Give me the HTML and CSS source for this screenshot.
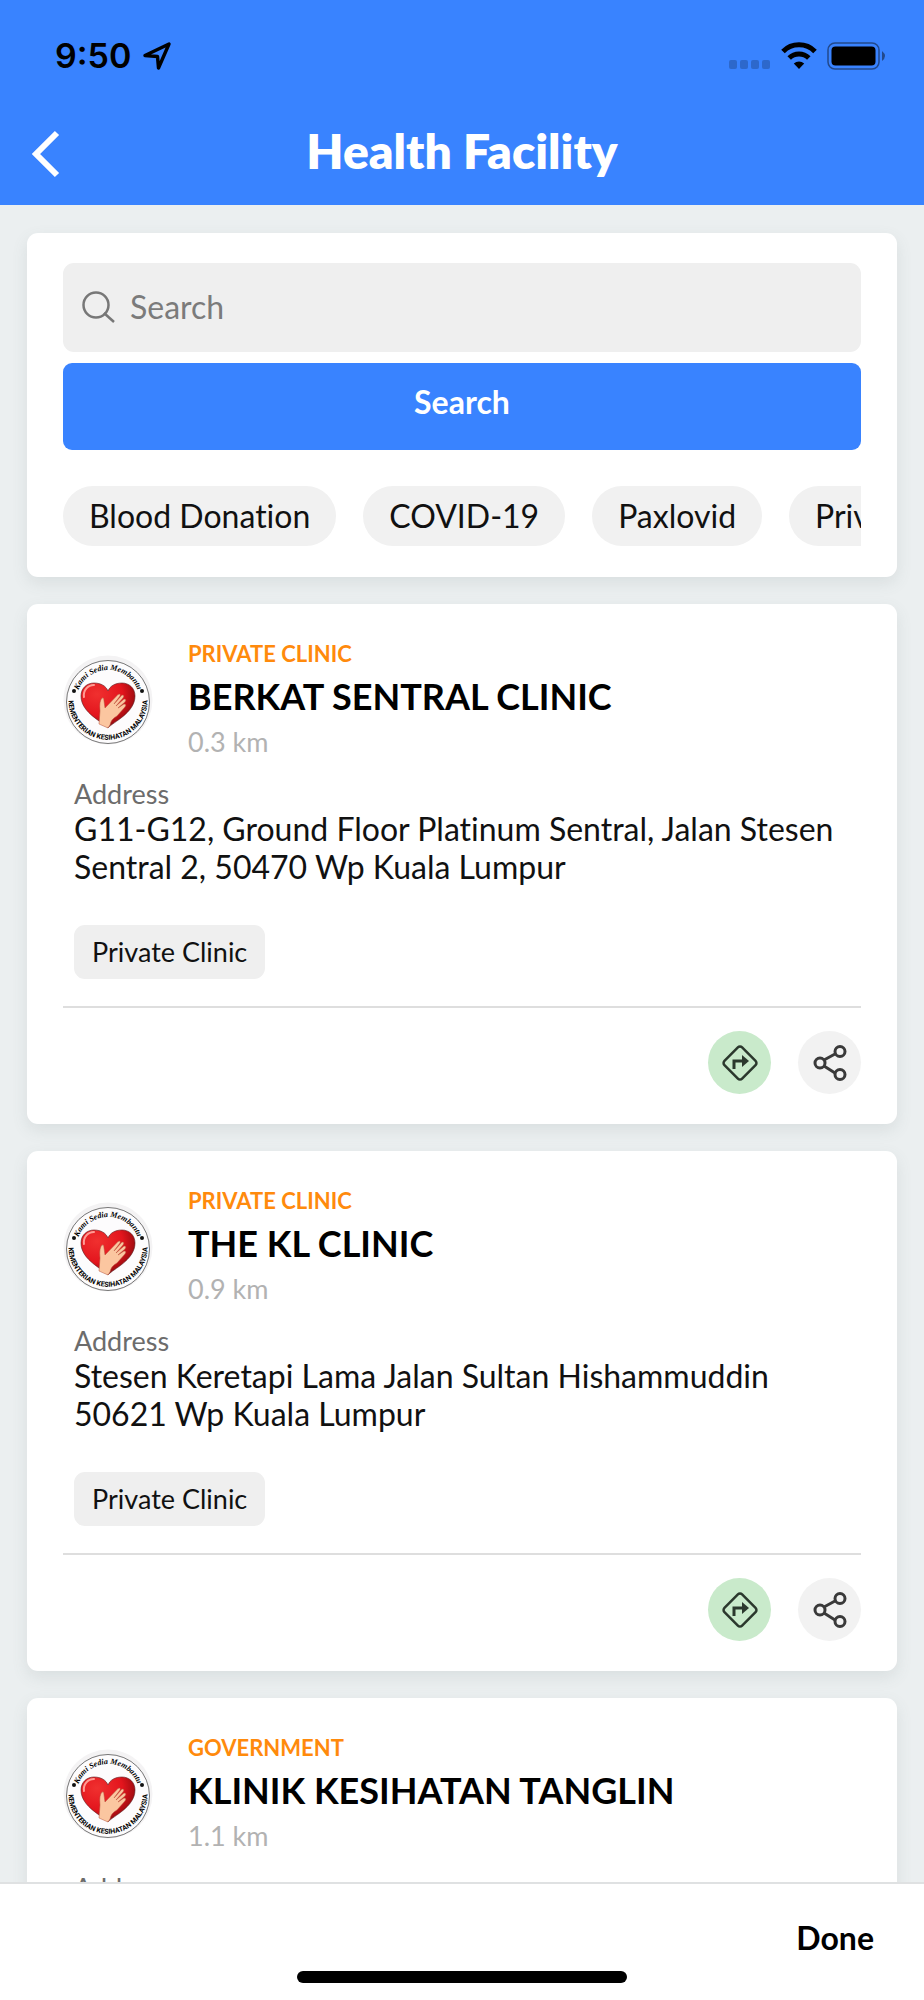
FILE: index.html
```html
<!DOCTYPE html>
<html lang="en">
<head>
    <meta charset="UTF-8">
    <meta name="viewport" content="width=device-width, initial-scale=1">
    <title>Health Facility</title>
    <link rel="stylesheet" href="styles.css">
</head>
<body>
<!-- shared icons -->
<svg class="sprite" aria-hidden="true">
    <defs>
        <radialGradient id="heartFill" cx="0.3" cy="0.25" r="0.85">
            <stop offset="0" stop-color="#f0302f"/>
            <stop offset="0.55" stop-color="#e3151d"/>
            <stop offset="0.8" stop-color="#a80d12"/>
            <stop offset="1" stop-color="#3a0406"/>
        </radialGradient>
        <path id="arcTop" d="M13 47 A32 32 0 0 1 77 47"/>
        <path id="arcBottom" d="M6 39 A39.500 39.500 0 1 0 84 39"/>
    </defs>
    <symbol id="logo" viewBox="0 0 90 90">
        <circle cx="45" cy="45" r="44.5" fill="#f4f3f4"/>
        <circle cx="45" cy="47" r="41.5" fill="#fdfcfd" stroke="#555" stroke-width="0.8"/>
        <path d="M45 73 C40 67 18 58 18 41 C18 33 24 28 31 28 C38 28 43 31 45 36 C47 31 52 28 59 28 C66 28 72 33 72 41 C72 58 50 67 45 73 Z" fill="url(#heartFill)" stroke="#5a1a1c" stroke-width="0.6"/>
        <path d="M21 42 C20 35 25 30 31 30" fill="none" stroke="#ff9c94" stroke-width="2" stroke-linecap="round"/>
        <path d="M36 69 L37 56 Q36 46 39 43 Q41 42 41 46 L42 53 L55 39.500 Q58 38 57 41 L51 49 L59 40 Q62 40 60 43 L53 51 L61 44 Q64 44 62 47 L55 53 L61 49 Q64 49 62 52 L54 61 Q48 64 47 70 L45 73 Z" fill="#fbc6a0" stroke="#b5523c" stroke-width="0.5"/>
        <circle cx="11" cy="36" r="2" fill="#111"/>
        <circle cx="79" cy="36" r="2" fill="#111"/>
        <text class="motto"><textPath href="#arcTop" startOffset="50%" text-anchor="middle">Kami Sedia Membantu</textPath></text>
        <text class="ministry"><textPath href="#arcBottom" startOffset="50%" text-anchor="middle">KEMENTERIAN KESIHATAN MALAYSIA</textPath></text>
    </symbol>
    <symbol id="directions" viewBox="0 0 36 36">
        <rect x="5.500" y="5.500" width="25" height="25" rx="3" transform="rotate(45 18 18)" fill="none" stroke="#2b382d" stroke-width="2.500"/>
        <path d="M12 24 V16 H21" fill="none" stroke="#2b382d" stroke-width="3"/>
        <path d="M20 10 L27 16 L20 22 Z" fill="#2b382d"/>
    </symbol>
    <symbol id="share" viewBox="0 0 36 36">
        <g fill="none" stroke="#3a3a3a" stroke-width="3">
            <path d="M12 15 L23 9 M12 21 L23 28"/>
            <circle cx="28" cy="6.500" r="5"/>
            <circle cx="8" cy="18" r="5"/>
            <circle cx="28" cy="29.500" r="5"/>
        </g>
    </symbol>
</svg>

<div class="app">
    <header class="header">
        <div class="statusbar">
            <span class="time">9:50</span>
            <svg class="location" width="28" height="28" viewBox="0 0 28 28"><path d="M2 13.500 L26 2 L15.500 26 L14.500 14.500 Z" fill="none" stroke="#000" stroke-width="3.400" stroke-linejoin="round"/></svg>
            <div class="signals">
                <svg width="42" height="28" viewBox="0 0 42 28" fill="#2d68cb"><rect x="0" y="18" width="8" height="9" rx="2"/><rect x="11" y="18" width="8" height="9" rx="2"/><rect x="22" y="18" width="8" height="9" rx="2"/><rect x="33" y="18" width="8" height="9" rx="2"/></svg>
                <svg width="36" height="28" viewBox="0 0 36 28"><path d="M2 9.500 A22.500 22.500 0 0 1 34 9.500" fill="none" stroke="#000" stroke-width="5"/><path d="M8.200 16 A14 14 0 0 1 27.800 16" fill="none" stroke="#000" stroke-width="5"/><path d="M18 27 L12.800 21.500 A8 8 0 0 1 23.200 21.500 Z"/></svg>
                <svg width="60" height="28" viewBox="0 0 60 28"><rect x="1" y="1" width="51" height="26" rx="7" fill="none" stroke="#22498c" stroke-width="1.500"/><rect x="4.500" y="4.500" width="44" height="19" rx="4"/><path d="M55 9 Q61 14 55 19 Z" fill="#22498c"/></svg>
            </div>
        </div>
        <div class="navbar">
            <button class="back" type="button" aria-label="Back"><svg width="30" height="48" viewBox="0 0 30 48"><path d="M26 3 L5 24 L26 45" fill="none" stroke="#fff" stroke-width="6"/></svg></button>
            <h1>Health Facility</h1>
        </div>
    </header>

    <main class="content">
        <form class="card search">
            <label class="search-box">
                <svg width="34" height="32" viewBox="0 0 34 32"><g fill="none" stroke="#777" stroke-width="2.500"><circle cx="14" cy="14" r="12.500"/><path d="M22 22 L32 31"/></g></svg>
                <input type="search" placeholder="Search" aria-label="Search">
            </label>
            <button class="search-button" type="submit">Search</button>
            <div class="filters">
                <button type="button">Blood Donation</button>
                <button type="button">COVID-19</button>
                <button type="button">Paxlovid</button>
                <button type="button">Private Clinic</button>
            </div>
        </form>

        <article class="card facility">
            <div class="summary">
                <svg class="logo"><use href="#logo"/></svg>
                <div>
                    <p class="type">PRIVATE CLINIC</p>
                    <h2>BERKAT SENTRAL CLINIC</h2>
                    <p class="distance">0.3 km</p>
                </div>
            </div>
            <div class="details">
                <p class="label">Address</p>
                <p class="address">G11-G12, Ground Floor Platinum Sentral, Jalan Stesen Sentral 2, 50470 Wp Kuala Lumpur</p>
                <span class="tag">Private Clinic</span>
            </div>
            <div class="actions">
                <button class="go" type="button" aria-label="Directions"><svg><use href="#directions"/></svg></button>
                <button type="button" aria-label="Share"><svg><use href="#share"/></svg></button>
            </div>
        </article>

        <article class="card facility">
            <div class="summary">
                <svg class="logo"><use href="#logo"/></svg>
                <div>
                    <p class="type">PRIVATE CLINIC</p>
                    <h2>THE KL CLINIC</h2>
                    <p class="distance">0.9 km</p>
                </div>
            </div>
            <div class="details">
                <p class="label">Address</p>
                <p class="address">Stesen Keretapi Lama Jalan Sultan Hishammuddin<br>50621 Wp Kuala Lumpur</p>
                <span class="tag">Private Clinic</span>
            </div>
            <div class="actions">
                <button class="go" type="button" aria-label="Directions"><svg><use href="#directions"/></svg></button>
                <button type="button" aria-label="Share"><svg><use href="#share"/></svg></button>
            </div>
        </article>

        <article class="card facility">
            <div class="summary">
                <svg class="logo"><use href="#logo"/></svg>
                <div>
                    <p class="type">GOVERNMENT</p>
                    <h2>KLINIK KESIHATAN TANGLIN</h2>
                    <p class="distance">1.1 km</p>
                </div>
            </div>
            <div class="details">
                <p class="label">Address</p>
            </div>
        </article>
    </main>

    <footer class="footer">
        <button class="done" type="button">Done</button>
        <div class="home"></div>
    </footer>
</div>
</body>
</html>
```
FILE: styles.css
```css
* {
    box-sizing: border-box;
}
body {
    margin: 0;
    background: #ebeff0;
    color: #111;
    font-family: Lato, "Open Sans", sans-serif;
    font-variant-ligatures: none;
}
h1, h2, p {
    margin: 0;
}
button, input {
    border: 0;
    padding: 0;
    font: inherit;
    font-variant-ligatures: none;
    color: inherit;
}
svg {
    display: block;
    flex: none;
}
.sprite {
    position: absolute;
    width: 0;
    height: 0;
}
.app {
    display: flex;
    flex-direction: column;
    height: 100vh;
}

/* header */
.header {
    background: #3983ff;
    padding-top: 32px;
    flex: none;
}
.statusbar {
    display: flex;
    align-items: center;
    height: 48px;
    padding: 0 37px 0 55px;
    color: #000;
}
.time {
    font: 600 34px/48px Inter, sans-serif;
}
.location {
    margin-left: 12px;
}
.signals {
    display: flex;
    gap: 10px;
    margin-left: auto;
}
.navbar {
    display: grid;
    grid-template-columns: 60px 1fr 60px;
    align-items: center;
    height: 125px;
    padding: 20px 31px;
}
.navbar .back {
    background: none;
    margin-top: 22px;
    justify-self: start;
}
.navbar h1 {
    color: #fff;
    font-size: 48px;
    font-weight: 800;
    line-height: 56px;
    margin-top: 16px;
    text-align: center;
}

/* cards */
.content {
    flex: 1;
    min-height: 0;
    overflow: hidden;
    display: flex;
    flex-direction: column;
    gap: 27px;
    padding: 28px 27px 0;
}
.card {
    flex: none;
    background: #fff;
    border-radius: 11px;
    box-shadow: 0 6px 16px rgba(90, 110, 110, 0.12);
    padding: 30px 36px;
}
.search-box {
    display: flex;
    align-items: center;
    gap: 14px;
    height: 89px;
    padding: 0 20px 2px 19px;
    border-radius: 11px;
    background: #efefef;
}
.search-box input {
    flex: 1;
    min-width: 0;
    background: none;
    font-size: 32px;
    outline: none;
}
.search-box input::placeholder {
    color: #7b7b7b;
}
.search-button {
    display: block;
    width: 100%;
    height: 87px;
    margin-top: 11px;
    padding-bottom: 10px;
    border-radius: 9px;
    background: #3983ff;
    color: #fff;
    font-size: 32px;
    font-weight: bold;
}
.filters {
    display: flex;
    gap: 27px;
    margin-top: 36px;
    margin-bottom: 1px;
    overflow: hidden;
}
.filters button {
    flex: none;
    height: 60px;
    padding: 0 26px 2px;
    border-radius: 30px;
    background: #f1f1f1;
    font-size: 32px;
}

.summary {
    display: flex;
    align-items: center;
    gap: 35px;
}
.logo {
    width: 90px;
    height: 90px;
}
.motto {
    font: italic bold 8px "Liberation Serif", serif;
}
.ministry {
    font: bold 7px Roboto, sans-serif;
}
.type {
    color: #ff8a0c;
    font-size: 22px;
    font-weight: bold;
    line-height: 40px;
}
.summary h2 {
    color: #000;
    font-size: 36px;
    font-weight: bold;
    line-height: 44px;
}
.distance {
    color: #b2b2b2;
    font-size: 27px;
    line-height: 48px;
}
.details {
    padding: 12px 11px 27px;
}
.label {
    color: #6c6c6c;
    font-size: 27px;
    line-height: 32px;
}
.address {
    font-size: 32px;
    line-height: 38px;
}
.tag {
    display: inline-block;
    margin-top: 39px;
    padding: 0 18px;
    border-radius: 11px;
    background: #efefef;
    font-size: 27px;
    line-height: 54px;
    vertical-align: top;
}
.actions {
    display: flex;
    justify-content: flex-end;
    gap: 27px;
    padding-top: 23px;
    border-top: 2px solid #dedede;
}
.actions button {
    display: grid;
    place-items: center;
    width: 63px;
    height: 63px;
    border-radius: 50%;
    background: #f2f2f2;
}
.actions .go {
    background: #c9eacb;
}
.actions svg {
    width: 36px;
    height: 36px;
}

/* bottom bar */
.footer {
    flex: none;
    display: flex;
    flex-direction: column;
    background: #fff;
    border-top: 2px solid #dfe1e2;
    padding: 34px 50px 17px;
}
.done {
    align-self: flex-end;
    background: none;
    color: #000;
    font-size: 32px;
    font-weight: bold;
    line-height: 40px;
}
.home {
    align-self: center;
    width: 40%;
    height: 12px;
    margin-top: 13px;
    border-radius: 6px;
    background: #000;
}
```
